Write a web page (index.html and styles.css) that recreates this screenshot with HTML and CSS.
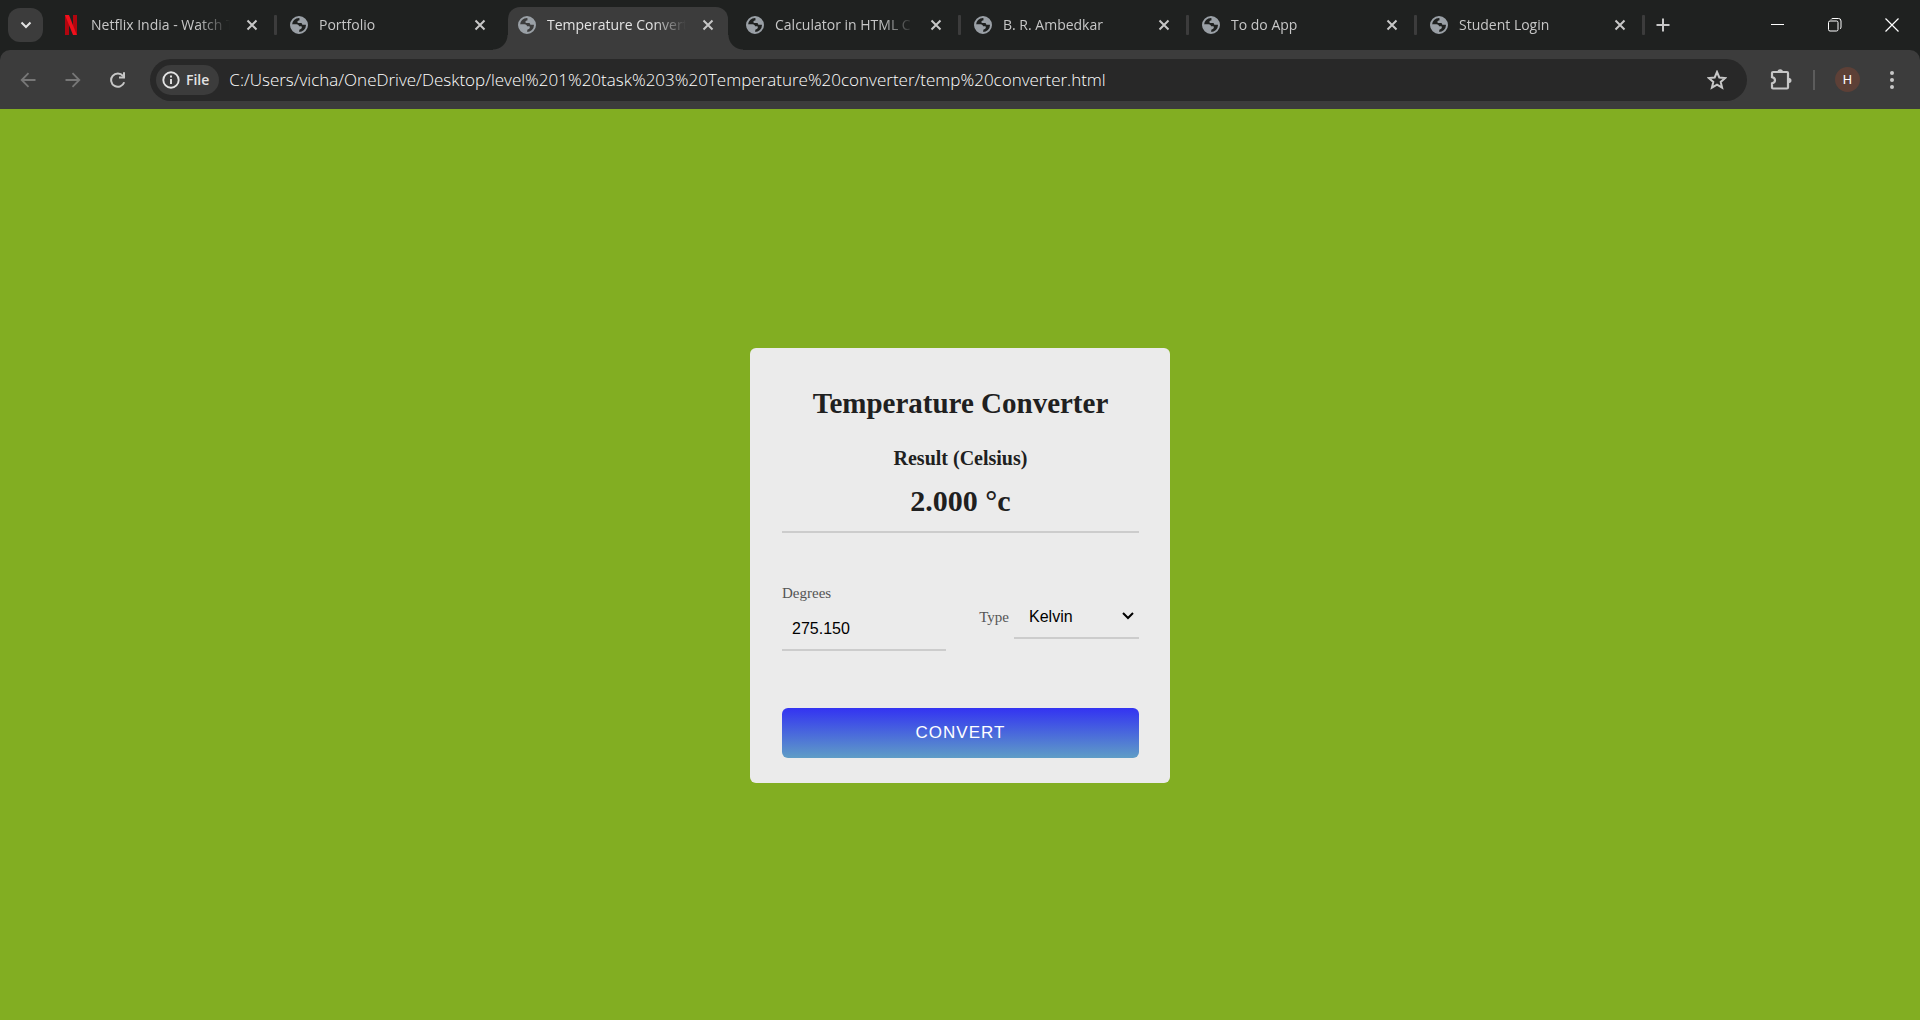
FILE: index.html
```html
<!DOCTYPE html>
<html lang="en">
<head>
<meta charset="utf-8">
<title>Temperature Converter</title>
<link rel="stylesheet" href="styles.css">
</head>
<body>
<svg class="defs" width="0" height="0" aria-hidden="true">
  <symbol id="globe" viewBox="0 0 18 18">
    <circle cx="9" cy="9" r="8" fill="none" stroke="#9aa0a6" stroke-width="2"/>
    <path fill="#9aa0a6" d="M10 1.500c3.600.4 6.500 3.500 6.600 7.200l-3.800.1c-.9-.1-1.200-1-1-1.700H8.400c-1.100 0-1.300-1.500-.6-2.100.5-.5 1.500-.3 1.700-1.100.1-.7-.5-1.600.5-2.400zM1.500 8.200h5c1.700 0 2.500 1 2.500 2.100h2.200c.9 0 .8 1.600.2 2.300-.6.7-1.900.5-2.100 1.400l-.1 2.500C5 16.700 1.300 13.500 1.500 8.200z"/>
  </symbol>
  <symbol id="x" viewBox="0 0 12 12">
    <path d="M1.500 1.500l9 9M10.500 1.500l-9 9" fill="none" stroke="currentColor" stroke-width="2"/>
  </symbol>
</svg>
<header class="browser">
  <div class="strip">
    <button class="search-tabs" aria-label="Search tabs"><svg width="12" height="8" viewBox="0 0 12 8"><path d="M1.500 1.500L6 6l4.500-4.500" fill="none" stroke="currentColor" stroke-width="2"/></svg></button>
    <nav class="tabs">
      <div class="tab line"><svg class="fav" viewBox="0 0 18 20"><path fill="#b1060f" d="M3 0h4v20l-4 .4zM11 0h4v20.400l-4-.4z"/><path fill="#f0101c" d="M3 0h4l8 20.400-4-.5z"/></svg><a href="#">Netflix India - Watch T</a><button aria-label="Close tab"><svg><use href="#x"/></svg></button></div>
      <div class="tab"><svg class="fav"><use href="#globe"/></svg><a href="#">Portfolio</a><button aria-label="Close tab"><svg><use href="#x"/></svg></button></div>
      <div class="tab active"><svg class="fav"><use href="#globe"/></svg><a href="#">Temperature Converte</a><button aria-label="Close tab"><svg><use href="#x"/></svg></button></div>
      <div class="tab line"><svg class="fav"><use href="#globe"/></svg><a href="#">Calculator in HTML C</a><button aria-label="Close tab"><svg><use href="#x"/></svg></button></div>
      <div class="tab line"><svg class="fav"><use href="#globe"/></svg><a href="#">B. R. Ambedkar</a><button aria-label="Close tab"><svg><use href="#x"/></svg></button></div>
      <div class="tab line"><svg class="fav"><use href="#globe"/></svg><a href="#">To do App</a><button aria-label="Close tab"><svg><use href="#x"/></svg></button></div>
      <div class="tab line"><svg class="fav"><use href="#globe"/></svg><a href="#">Student Login</a><button aria-label="Close tab"><svg><use href="#x"/></svg></button></div>
    </nav>
    <button class="new-tab" aria-label="New tab"><svg width="14" height="14" viewBox="0 0 14 14"><path d="M7 .5v13M.5 7h13" stroke="currentColor" stroke-width="2"/></svg></button>
    <div class="window-controls">
      <button aria-label="Minimize"><svg width="14" height="14" viewBox="0 0 14 14"><path d="M0 6.500h13" stroke="#fff"/></svg></button>
      <button aria-label="Restore"><svg width="14" height="14" viewBox="0 0 14 14" fill="none" stroke="#fff"><rect x=".5" y="3" width="9.500" height="10" rx="1.500"/><path d="M3 1.500Q3.500.5 5 .5h5.500q2.500 0 2.500 2.500v6q0 1.500-1 2"/></svg></button>
      <button aria-label="Close"><svg width="14" height="14" viewBox="0 0 14 14"><path d="M.5.500l13 13M13.500.500l-13 13" stroke="#fff" stroke-width="1.200"/></svg></button>
    </div>
  </div>
  <div class="toolbar">
    <div class="history">
      <button class="dim" aria-label="Back"><svg width="16" height="16" viewBox="0 0 16 16"><path d="M15.500 8H2M8.500 1.200L1.700 8l6.800 6.800" fill="none" stroke="currentColor" stroke-width="1.800"/></svg></button>
      <button class="dim" aria-label="Forward"><svg width="16" height="16" viewBox="0 0 16 16"><path d="M.5 8H14M7.500 1.200L14.300 8l-6.800 6.800" fill="none" stroke="currentColor" stroke-width="1.800"/></svg></button>
      <button aria-label="Reload"><svg width="16" height="16" viewBox="0 0 16 16"><path d="M14.200 10.200A6.700 6.700 0 1 1 13 3.800L14.500 5.500" fill="none" stroke="currentColor" stroke-width="2"/><path d="M15 .3v6.200H9V4.600h4V.3z" fill="currentColor"/></svg></button>
    </div>
    <div class="omnibox">
      <button class="chip"><svg width="18" height="18" viewBox="0 0 18 18"><circle cx="9" cy="9" r="7.700" fill="none" stroke="currentColor" stroke-width="1.900"/><path d="M9 8v5M9 4.600v1.900" stroke="currentColor" stroke-width="1.900"/></svg>File</button>
      <input class="url" type="text" aria-label="Address" value="C:/Users/vicha/OneDrive/Desktop/level%201%20task%203%20Temperature%20converter/temp%20converter.html">
      <button class="star" aria-label="Bookmark"><svg width="20" height="20" viewBox="0 0 20 20"><path d="M10 2l2.300 5.500 6 .5-4.600 3.900 1.400 5.800-5.100-3.100-5.100 3.100 1.400-5.800L1.700 8l6-.5z" fill="none" stroke="currentColor" stroke-width="2"/></svg></button>
    </div>
    <div class="actions">
      <button aria-label="Extensions"><svg width="22" height="22" viewBox="0 0 22 22"><path d="M3 3h14q1 0 1 1v14.500q0 1-1 1H3q-1 0-1-1v-4.200q3-.6 3-3.100T2 8.100V4q0-1 1-1z" fill="none" stroke="currentColor" stroke-width="2.200"/><path d="M7.500 3q0-2.700 2.700-2.700T13 3zM18 8.700q3.500 0 3.500 2.700T18 14.200z" fill="currentColor"/></svg></button>
      <span class="rule"></span>
      <button class="avatar" aria-label="Profile">H</button>
      <button aria-label="Menu"><svg width="4" height="18" viewBox="0 0 4 18" fill="currentColor"><circle cx="2" cy="2" r="2"/><circle cx="2" cy="9" r="2"/><circle cx="2" cy="16" r="2"/></svg></button>
    </div>
  </div>
</header>
<main class="page">
  <form class="card" onsubmit="return false">
    <h1>Temperature Converter</h1>
    <h2>Result (Celsius)</h2>
    <output class="result" for="degrees type">2.000 °c</output>
    <div class="fields">
      <div class="degrees">
        <label for="degrees">Degrees</label>
        <input id="degrees" type="text" value="275.150">
      </div>
      <div class="type">
        <label for="type">Type</label>
        <select id="type"><option>Fahrenheit</option><option selected>Kelvin</option></select>
      </div>
    </div>
    <button class="convert">CONVERT</button>
  </form>
</main>
</body>
</html>
```
FILE: styles.css
```css
* { box-sizing: border-box; }
body {
  margin: 0;
  min-height: 100vh;
  display: flex;
  flex-direction: column;
  background: #82ae22;
  color: #202020;
  font-family: "Liberation Serif", "Times New Roman", serif;
}
button, input, select { margin: 0; border: 0; background: none; color: inherit; font: inherit; outline: none; }
button { padding: 0; display: flex; align-items: center; justify-content: center; }
svg { display: block; flex: none; }
.defs { position: absolute; }

.browser { background: #1f2120; color: #c7c7c7; font-family: "Open Sans", "Segoe UI", sans-serif; }
.strip { display: flex; align-items: center; height: 50px; padding-left: 8px; }
.search-tabs { width: 35px; height: 34px; border-radius: 12px; background: #3c3c3c; color: #e3e3e3; flex: none; }
.tabs { display: flex; align-self: stretch; flex: 0 1 1596px; margin-left: 4px; min-width: 0; }
.tab {
  position: relative;
  display: flex;
  align-items: center;
  flex: 0 1 228px;
  min-width: 0;
  padding: 0 17px 0 15px;
}
.fav { width: 18px; height: 18px; }
.tab:first-child .fav { height: 20px; }
.tab a {
  flex: 1;
  min-width: 0;
  margin-left: 11px;
  margin-right: 13px;
  overflow: hidden;
  white-space: nowrap;
  font-size: 14px;
  line-height: 20px;
  color: #c7c7c7;
  text-decoration: none;
  -webkit-mask-image: linear-gradient(to right, #000 75%, transparent 98%);
  mask-image: linear-gradient(to right, #000 75%, transparent 98%);
}
.tab button, .tab button svg { width: 12px; height: 12px; }
.tab.line::after {
  content: "";
  position: absolute;
  right: -2px;
  top: 15px;
  width: 3px;
  height: 20px;
  border-radius: 1px;
  background: #3c3c3c;
}
.tab.active { z-index: 1; }
.tab.active::before {
  content: "";
  position: absolute;
  z-index: -1;
  inset: 7px 3px 0 5px;
  border-radius: 12px 12px 0 0;
  background: #3c3c3c;
}
.tab.active::after {
  content: "";
  position: absolute;
  z-index: -1;
  left: -10px;
  right: -12px;
  bottom: 0;
  height: 15px;
  background:
    radial-gradient(circle at 0 0, transparent 14px, #3c3c3c 15px) left / 15px 15px no-repeat,
    radial-gradient(circle at 100% 0, transparent 14px, #3c3c3c 15px) right / 15px 15px no-repeat;
}
.tab.active a { color: #e3e3e3; }
.new-tab { width: 40px; height: 34px; flex: none; }
.window-controls { display: flex; margin-left: auto; align-self: stretch; }
.window-controls button { width: 57px; }

.toolbar {
  display: flex;
  align-items: center;
  height: 59px;
  border-radius: 10px 10px 0 0;
  background: #3c3c3c;
}
.history { display: flex; gap: 29px; padding: 0 24px 0 20px; }
.dim { color: #777; }
.omnibox {
  display: flex;
  align-items: center;
  flex: 1;
  height: 42px;
  padding: 0 20px 0 6px;
  border-radius: 21px;
  background: #282828;
  color: #e3e3e3;
}
.chip { gap: 6px; height: 30px; padding: 0 10px 0 6px; border-radius: 15px; background: #3c3c3c; font-size: 14px; font-weight: 600; }
.url { flex: 1; min-width: 0; height: 30px; margin-left: 10px; padding: 0; font-size: 17px; font-weight: 300; color: #fff; }
.star { color: #c7c7c7; }
.actions { display: flex; align-items: center; padding: 0 26px 0 23px; }
.rule { width: 2px; height: 20px; margin: 0 20px 0 21px; background: #5c5c5c; }
.avatar { width: 25px; height: 25px; margin-right: 30px; border-radius: 50%; background: #5d4037; color: #fff; font: 13px Roboto, sans-serif; }

.page { flex: 1; display: flex; align-items: center; justify-content: center; padding: 24px 16px 22px; }
.card {
  width: 420px;
  max-width: 100%;
  padding: 35px 31px 25px 32px;
  border-radius: 6px;
  background: #ebebeb;
  display: flex;
  flex-direction: column;
}
h1, h2 { margin: 0; text-align: center; }
h1 { font-size: 29px; line-height: 40px; }
h2 { margin-top: 20px; font-size: 20px; line-height: 30px; }
.result {
  margin-top: 8px;
  padding-bottom: 10px;
  border-bottom: 2px solid #ccc;
  font-size: 30px;
  font-weight: 700;
  line-height: 40px;
  text-align: center;
}
.fields { display: flex; align-items: center; gap: 33px; margin: 50px 0 57px; }
label { font-size: 15px; line-height: 20px; color: #555; }
.degrees { flex: 1; min-width: 0; }
.degrees label { display: block; }
.degrees input {
  display: block;
  width: 100%;
  height: 46px;
  margin-top: 2px;
  padding: 4px 10px 0;
  border-bottom: 2px solid #ccc;
}
.degrees input, .type select { color: #000; font: 16px "Liberation Sans", Arial, sans-serif; }
.type { display: flex; align-items: center; gap: 5px; }
.type select {
  appearance: none;
  width: 125px;
  height: 44px;
  padding: 0 15px;
  border-bottom: 2px solid #ccc;
  background: url("data:image/svg+xml,%3Csvg xmlns='http://www.w3.org/2000/svg' width='12' height='8'%3E%3Cpath d='M1 1l5 5 5-5' fill='none' stroke='%23000' stroke-width='2'/%3E%3C/svg%3E") right 5px center no-repeat;
}
.convert {
  height: 50px;
  border-radius: 6px;
  background: linear-gradient(#3333f2, #5f9dc6);
  color: #fff;
  font: 17px "Liberation Sans", Arial, sans-serif;
  letter-spacing: 1px;
}
```
